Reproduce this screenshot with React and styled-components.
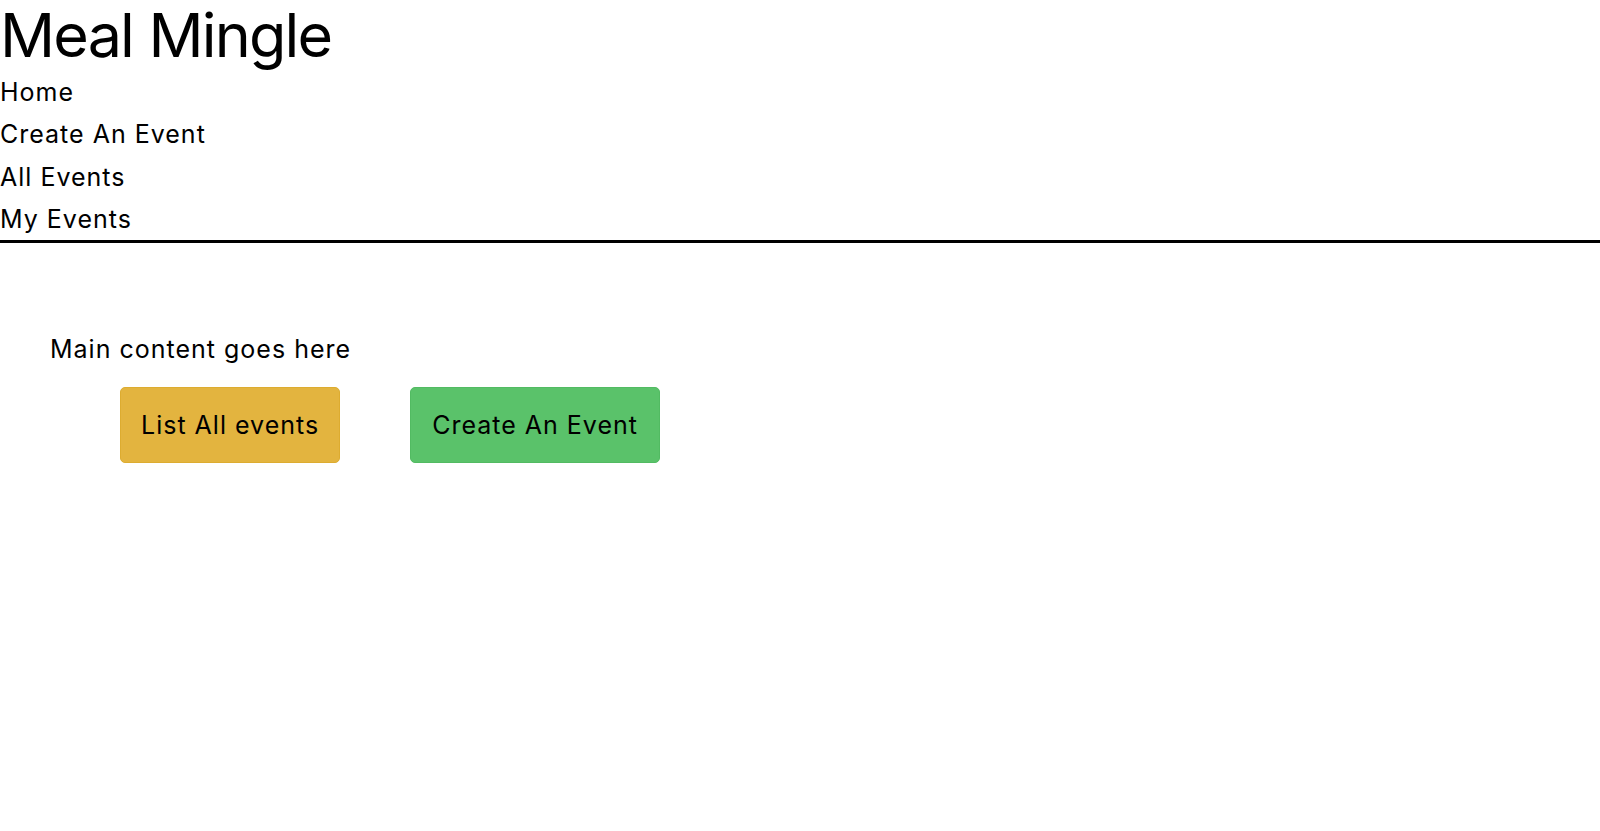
import styled, {createGlobalStyle} from "styled-components";

const GlobalStyle = createGlobalStyle`
  body {
    margin: 0;
    background: #fff;
    color: #000;
    font-family: Inter, "Noto Sans", sans-serif;
  }
`;

const Header = styled.header`
  border-bottom: 3px solid #000;
`;

const Title = styled.h1`
  margin: 0;
  font-size: 61px;
  font-weight: 400;
  line-height: 71px;
  letter-spacing: -1.8px;
`;

const Nav = styled.nav`
  display: flex;
  flex-direction: column;
`;

const NavLink = styled.a`
  font-size: 25px;
  line-height: 42.25px;
  letter-spacing: 1px;
  color: #000;
  text-decoration: none;
  cursor: pointer;
`;

const Main = styled.main`
  padding: 91px 50px 0;
`;

const Intro = styled.p`
  margin: 0 0 23px;
  font-size: 25px;
  line-height: 30px;
  letter-spacing: 1px;
`;

const Actions = styled.div`
  display: flex;
  gap: 70px;
  padding-left: 70px;
`;

const Button = styled.button`
  height: 76px;
  padding: 0 ${p => p.$pad}px;
  border: 1px solid ${p => p.$border};
  border-radius: 5px;
  background: ${p => p.$bg};
  color: #000;
  font-family: inherit;
  font-size: 25px;
  letter-spacing: 1px;
  cursor: pointer;
`;

export default function App() {
    return <>
        <GlobalStyle/>
        <Header>
            <Title>Meal Mingle</Title>
            <Nav>
                <NavLink>Home</NavLink>
                <NavLink>Create An Event</NavLink>
                <NavLink>All Events</NavLink>
                <NavLink>My Events</NavLink>
            </Nav>
        </Header>
        <Main>
            <Intro>Main content goes here</Intro>
            <Actions>
                <Button $pad={20} $bg="#e3b43f" $border="#ddac30">List All events</Button>
                <Button $pad={21} $bg="#5ac26a" $border="#52bb62">Create An Event</Button>
            </Actions>
        </Main>
    </>
}
